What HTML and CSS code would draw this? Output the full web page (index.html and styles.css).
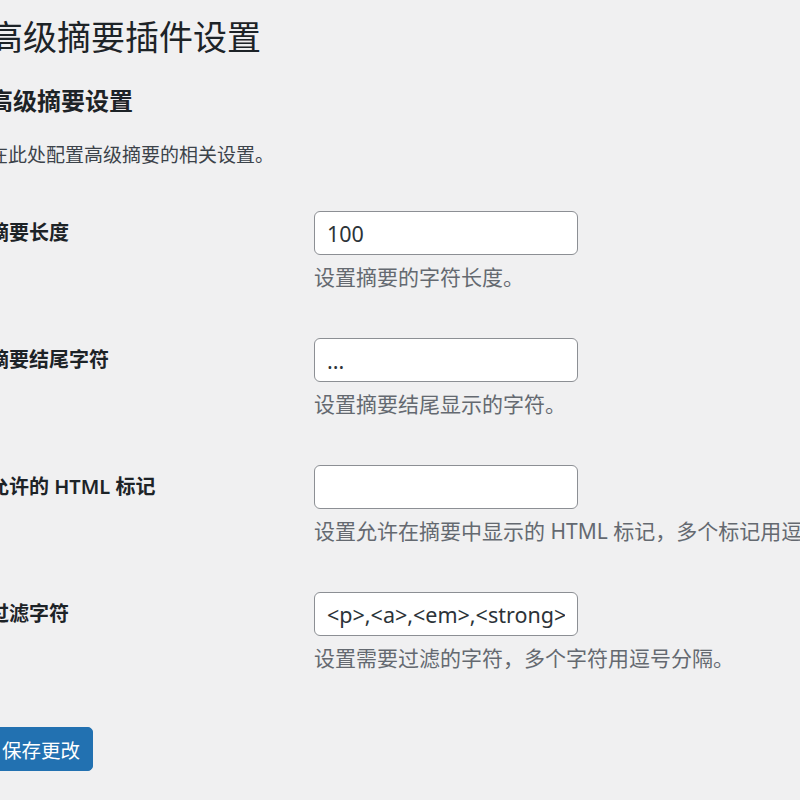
FILE: index.html
```html
<!DOCTYPE html>
<html lang="zh-CN">
<head>
  <meta charset="UTF-8">
  <meta name="viewport" content="width=device-width, initial-scale=1.0">
  <title>高级摘要插件设置</title>
  <link rel="stylesheet" href="styles.css">
</head>
<body>

  <div class="wrap">
    <h1>高级摘要插件设置</h1>

    <form id="excerpt-settings">
      <h2>高级摘要设置</h2>
      <p class="section-intro">在此处配置高级摘要的相关设置。</p>

      <div class="form-table">
        <div class="form-row">
          <label for="excerpt-length">摘要长度</label>
          <div class="field">
            <input type="text" id="excerpt-length" value="100">
            <p class="description">设置摘要的字符长度。</p>
          </div>
        </div>

        <div class="form-row">
          <label for="excerpt-more">摘要结尾字符</label>
          <div class="field">
            <input type="text" id="excerpt-more" value="...">
            <p class="description">设置摘要结尾显示的字符。</p>
          </div>
        </div>

        <div class="form-row">
          <label for="allowed-tags">允许的 HTML 标记</label>
          <div class="field">
            <input type="text" id="allowed-tags" value="">
            <p class="description">设置允许在摘要中显示的 HTML 标记，多个标记用逗号分隔。</p>
          </div>
        </div>

        <div class="form-row">
          <label for="filter-chars">过滤字符</label>
          <div class="field">
            <input type="text" id="filter-chars" value="<p>,<a>,<em>,<strong>">
            <p class="description">设置需要过滤的字符，多个字符用逗号分隔。</p>
          </div>
        </div>
      </div>

      <p class="submit">
        <button type="submit" id="submit">保存更改</button>
      </p>
    </form>
  </div>

</body>
</html>
```

FILE: styles.css
```css
/* Admin settings screen */
html, body {
  margin: 0;
  padding: 0;
  overflow: hidden;
}
body {
  background-color: #f0f0f1;
  color: #1d2327;
  font-family: "Noto Sans", "Noto Sans CJK SC", sans-serif;
  font-size: 18.5px;
  min-height: 100vh;
}
.wrap {
  margin-left: -11px;
  padding-top: 16px;
}
h1 {
  margin: 0;
  font-size: 34px;
  font-weight: 400;
  line-height: 43px;
  color: #1d2327;
}
h2 {
  margin: 27px 0 0;
  font-size: 24px;
  font-weight: 600;
  line-height: 30px;
  color: #1d2327;
}
.section-intro {
  margin: 26px 0 0;
  font-size: 19px;
  line-height: 26px;
  color: #3c434a;
}
.form-table {
  margin-top: 43px;
  display: flex;
  flex-direction: column;
  gap: 48px;
}
.form-row {
  display: flex;
}
.form-row label {
  width: 325px;
  flex-shrink: 0;
  font-size: 20px;
  font-weight: 600;
  line-height: 44px;
  color: #1d2327;
}
.field {
  display: flex;
  flex-direction: column;
}
.field input {
  box-sizing: border-box;
  width: 264px;
  height: 44px;
  margin: 0;
  padding: 0 12px;
  font-family: inherit;
  font-size: 21.5px;
  color: #2c3338;
  background-color: #fff;
  border: 1px solid #8c8f94;
  border-radius: 6px;
  outline: none;
}
.description {
  margin: 9px 0 0;
  font-size: 21px;
  line-height: 26px;
  color: #646970;
  white-space: nowrap;
}
.submit {
  margin: 56px 0 0;
  padding: 0;
}
#submit {
  height: 44px;
  padding: 0 12px;
  font-family: inherit;
  font-size: 19.5px;
  color: #fff;
  background-color: #2271b1;
  border: 1px solid #2271b1;
  border-radius: 5px;
  cursor: pointer;
}
#submit:hover {
  background-color: #135e96;
}
```
